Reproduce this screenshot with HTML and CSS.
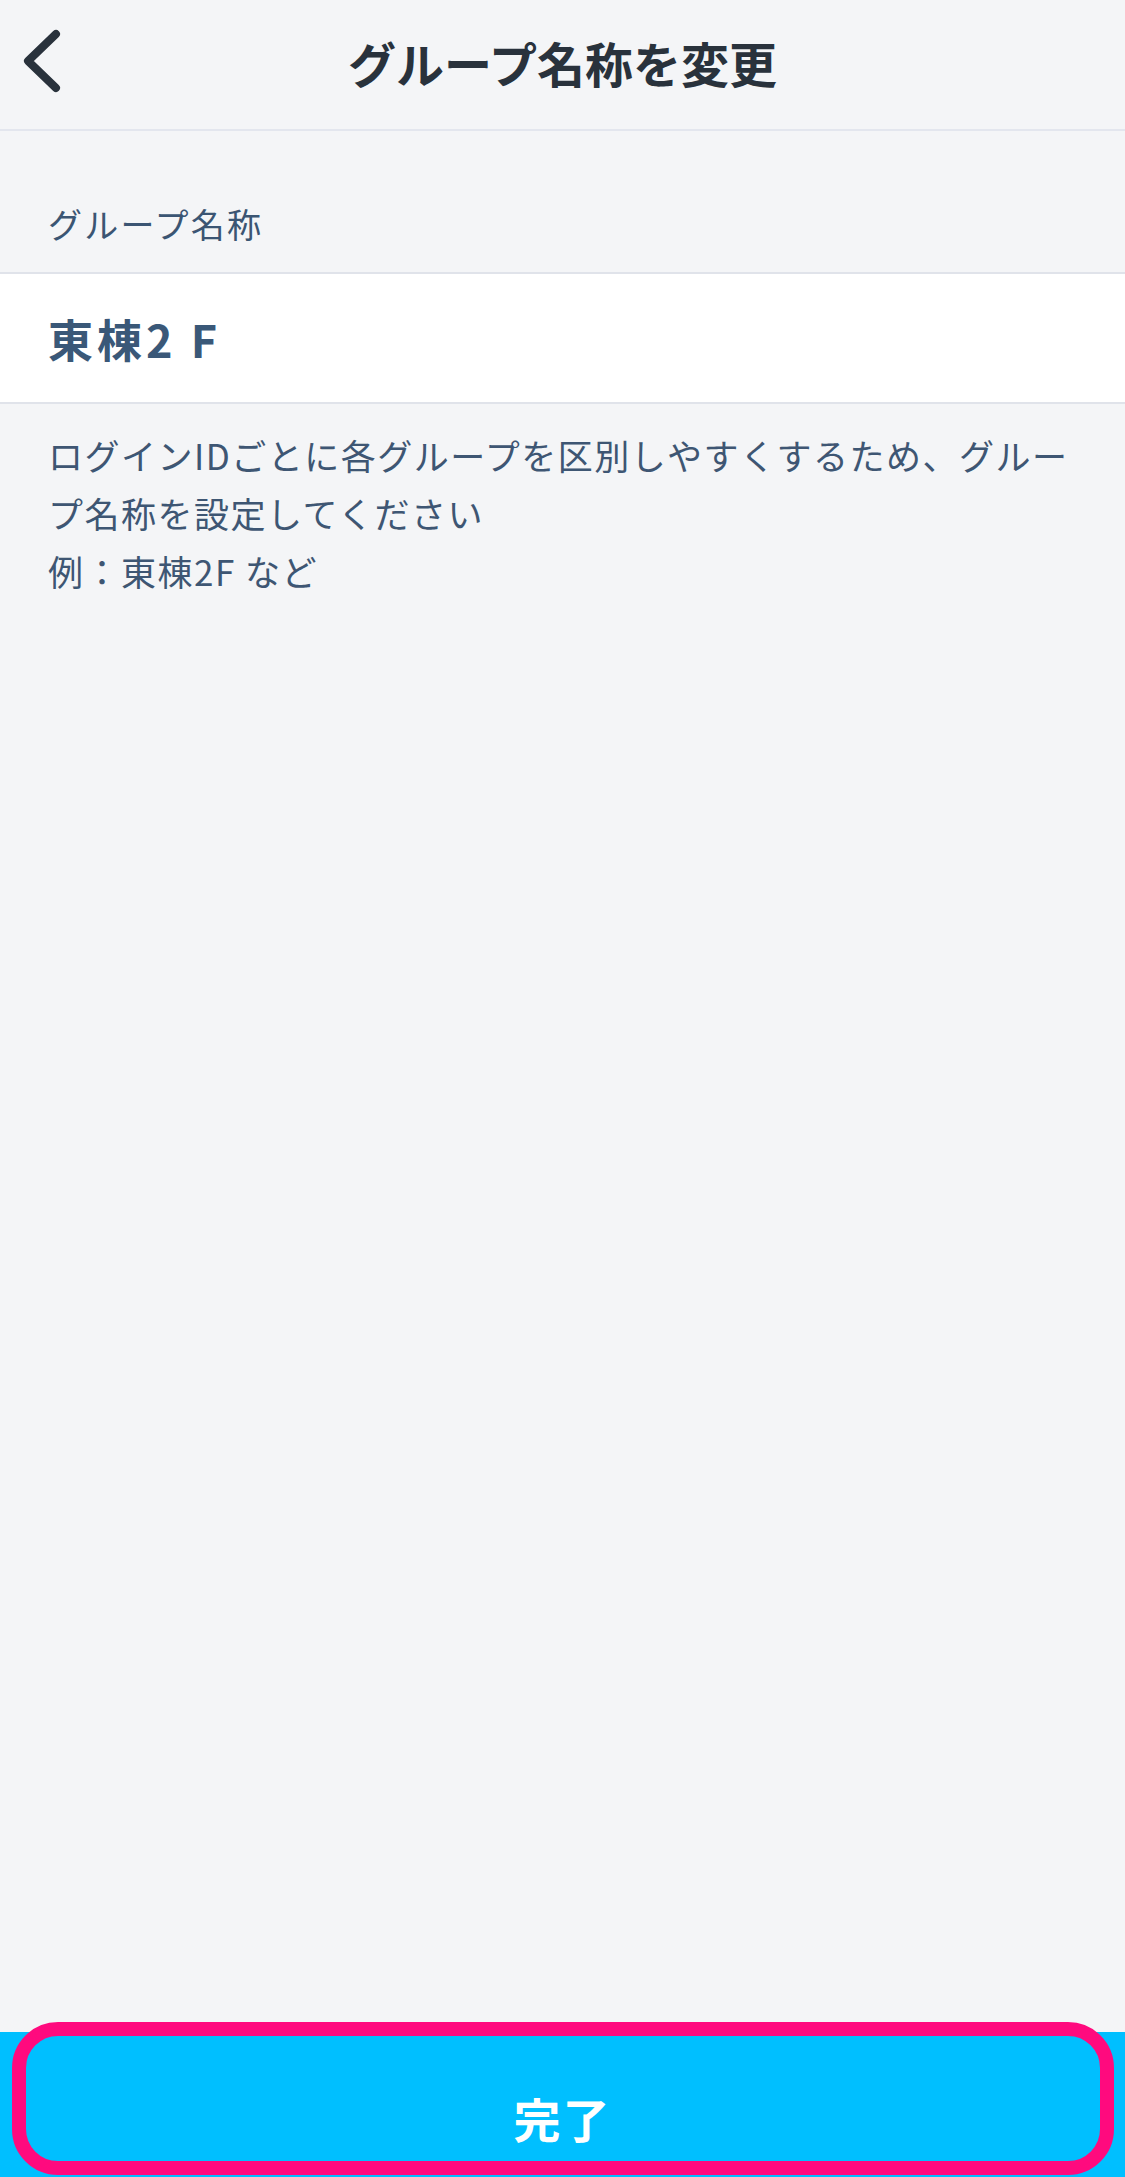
FILE: index.html
```html
<!DOCTYPE html>
<html lang="ja">
<head>
<meta charset="utf-8">
<title>グループ名称を変更</title>
<link rel="stylesheet" href="styles.css">
</head>
<body>
<div class="screen">
  <header class="nav">
    <button class="back" aria-label="戻る">
      <svg width="44" height="70" viewBox="0 0 44 70"><path d="M34 6 L6 33 L34 60" fill="none" stroke="#29323c" stroke-width="8" stroke-linecap="round" stroke-linejoin="round"/></svg>
    </button>
    <h1 class="title">グループ名称を変更</h1>
  </header>
  <main class="content">
    <div class="section-label">グループ名称</div>
    <div class="field">東棟2 F</div>
    <p class="note">ログインIDごとに各グループを区別しやすくするため、グループ名称を設定してください<br>例：東棟2F など</p>
  </main>
  <footer class="footer">
    <button class="done">完了</button>
    <div class="highlight"></div>
  </footer>
</div>
</body>
</html>
```
FILE: styles.css
```css
html, body {
  margin: 0;
  padding: 0;
}
body {
  background: #f4f5f7;
  font-family: "Noto Sans CJK JP", "Noto Sans", sans-serif;
}
.screen {
  height: 2177px;
  display: flex;
  flex-direction: column;
  overflow: hidden;
}
.nav {
  height: 129px;
  border-bottom: 2px solid #e3e6ee;
  display: flex;
  align-items: center;
  justify-content: center;
  position: relative;
}
.back {
  position: absolute;
  left: 22px;
  top: 28px;
  background: none;
  border: 0;
  padding: 0;
  width: 44px;
  height: 70px;
}
.title {
  margin: 0;
  font-size: 48px;
  font-weight: 700;
  letter-spacing: 0;
  color: #29323c;
  line-height: 1;
  transform: translateY(-3px);
}
.content {
  flex: 1;
  display: flex;
  flex-direction: column;
}
.section-label {
  height: 141px;
  box-sizing: border-box;
  padding: 71px 0 0 48px;
  font-size: 34px;
  letter-spacing: 2.2px;
  line-height: 44px;
  color: #3b5573;
}
.field {
  background: #fff;
  border-top: 2px solid #e0e3ea;
  border-bottom: 2px solid #e0e3ea;
  height: 128px;
  box-sizing: content-box;
  padding-left: 48px;
  display: flex;
  align-items: center;
  font-size: 45px;
  font-weight: 700;
  letter-spacing: 4px;
  color: #3a5878;
}
.note {
  margin: 0;
  padding: 22px 40px 0 48px;
  font-size: 35px;
  line-height: 58px;
  letter-spacing: 1.5px;
  color: #3e5673;
}
.footer {
  height: 145px;
  background: #00bfff;
  position: relative;
}
.done {
  width: 100%;
  height: 100%;
  background: none;
  border: 0;
  padding: 26px 0 0;
  font-family: inherit;
  font-size: 47px;
  font-weight: 700;
  color: #fff;
  letter-spacing: 2px;
}
.highlight {
  position: absolute;
  left: 12px;
  top: -10px;
  width: 1102px;
  height: 153px;
  box-sizing: border-box;
  border: 14px solid #ff0a7e;
  border-radius: 46px;
  pointer-events: none;
}
```
